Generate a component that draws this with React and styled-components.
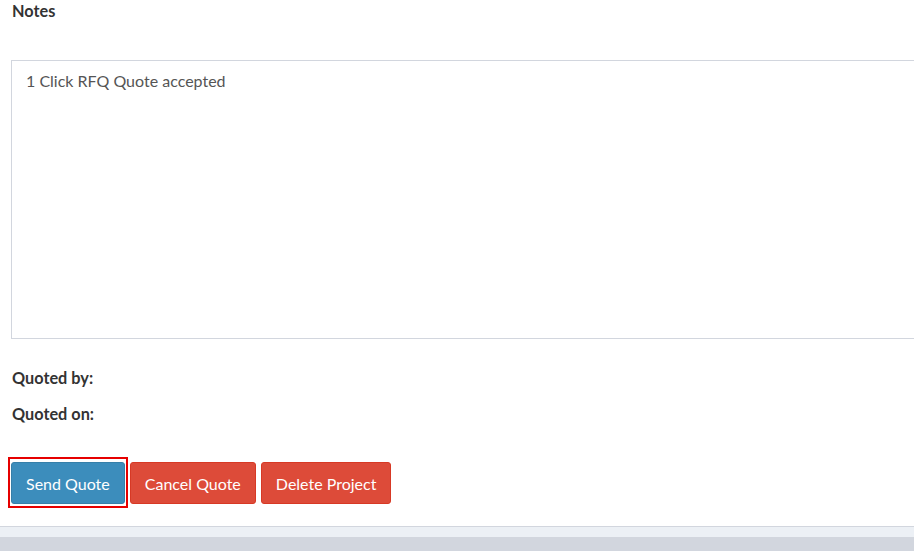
import React from "react";
import styled, { createGlobalStyle } from "styled-components";

const GlobalStyle = createGlobalStyle`
  html, body {
    margin: 0;
    padding: 0;
    background: #d2d6de;
  }
  body {
    font-family: "Lato", "Liberation Sans", sans-serif;
    color: #333;
    overflow: hidden;
  }
`;

const Box = styled.div`
  background: #fff;
  border-bottom: 1px solid #d2d6de;
  padding: 0 0 0 11px;
  height: 527px;
  box-sizing: border-box;
  overflow: hidden;
`;

const Label = styled.div`
  font-size: 16.3px;
  font-weight: 700;
  line-height: 25px;
  color: #333;
  padding-left: 1px;
  margin-top: ${(p) => p.$top || 0}px;
`;

const NotesField = styled.div`
  margin-top: 37px;
  margin-right: -20px;
  height: 279px;
  box-sizing: border-box;
  border: 1px solid #d2d6de;
  border-right: none;
  padding: 7px 14px;
  font-size: 16px;
  line-height: 25px;
  color: #555;
`;

const Actions = styled.div`
  display: flex;
  gap: 5px;
  margin-top: 36px;
`;

const Button = styled.button`
  position: relative;
  font-family: inherit;
  font-size: 16px;
  line-height: 25px;
  color: #fff;
  height: 42px;
  padding: 0 14px;
  border-radius: 3px;
  border: 1px solid ${(p) => (p.$variant === "danger" ? "#d73925" : "#367fa9")};
  background: ${(p) => (p.$variant === "danger" ? "#dd4b39" : "#3c8dbc")};
  cursor: pointer;

  ${(p) =>
    p.$focused &&
    `
    &::after {
      content: "";
      position: absolute;
      top: -6px;
      bottom: -5px;
      left: -4px;
      right: -4px;
      border: 2px solid #e60000;
    }
  `}
`;

const Footer = styled.div`
  height: 10px;
  background: #ecf0f5;
`;

export default function App() {
  return (
    <>
      <GlobalStyle />
      <Box>
        <Label $top={-2}>Notes</Label>
        <NotesField>1 Click RFQ Quote accepted</NotesField>
        <Label $top={26}>Quoted by:</Label>
        <Label $top={11}>Quoted on:</Label>
        <Actions>
          <Button $focused>Send Quote</Button>
          <Button $variant="danger">Cancel Quote</Button>
          <Button $variant="danger">Delete Project</Button>
        </Actions>
      </Box>
      <Footer />
    </>
  );
}
